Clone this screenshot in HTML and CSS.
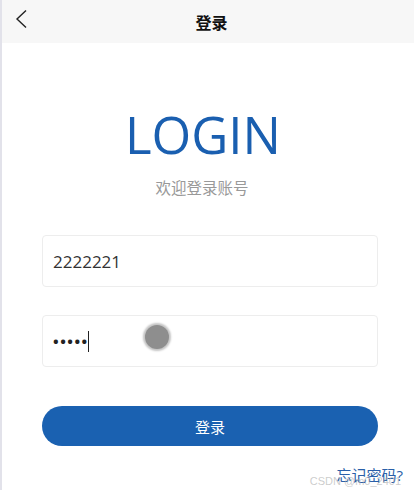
FILE: index.html
```html
<!DOCTYPE html>
<html lang="zh-CN">
<head>
  <meta charset="UTF-8">
  <meta name="viewport" content="width=device-width, initial-scale=1.0">
  <title>登录</title>
  <link rel="stylesheet" href="styles.css">
</head>
<body>
  <div class="page">
    <header class="nav">
      <a class="back" href="#">
        <svg width="14" height="20" viewBox="0 0 14 20"><path d="M12 1.5 L3 10 L12 18.5" fill="none" stroke="#222" stroke-width="1.4"/></svg>
      </a>
      <h2 class="nav-title">登录</h2>
    </header>

    <main class="login">
      <h1 class="logo">LOGIN</h1>
      <p class="welcome">欢迎登录账号</p>

      <div class="field">2222221</div>
      <div class="field password">
        <span class="dots">•••••</span><span class="caret"></span>
        <span class="touch"></span>
      </div>

      <button class="btn">登录</button>

      <div class="links">
        <a href="#" class="forgot">忘记密码?</a>
        <span class="mark">CSDN @m0_2401</span>
      </div>
    </main>
  </div>
</body>
</html>
```

FILE: styles.css
```css
body {
  margin: 0;
  font-family: "Open Sans", "Noto Sans CJK SC", sans-serif;
  background: #fff;
  color: #333;
}
.page {
  border-left: 2px solid #e2e2ea;
  min-height: 490px;
  box-sizing: border-box;
}
.nav {
  height: 43px;
  background: #f7f7f7;
  display: flex;
  align-items: center;
  justify-content: center;
  padding-left: 7px;
  position: relative;
}
.back {
  position: absolute;
  left: 12px;
  top: 9px;
}
.nav-title {
  margin: 0;
  font-size: 16px;
  font-weight: bold;
  color: #111;
}
.login {
  padding: 0 36px 0 40px;
  display: flex;
  flex-direction: column;
  align-items: stretch;
}
.logo {
  margin: 61px 14px 0 0;
  text-align: center;
  font-size: 51px;
  font-weight: normal;
  line-height: 60px;
  color: #1a5fb0;
}
.welcome {
  margin: 14px 16px 0 0;
  text-align: center;
  font-size: 15.5px;
  line-height: 20px;
  color: #999;
}
.field {
  height: 50px;
  margin-top: 37px;
  border: 1px solid #ededed;
  border-radius: 4px;
  padding: 0 10px;
  display: flex;
  align-items: center;
  font-size: 17px;
  color: #333;
  position: relative;
}
.field.password {
  margin-top: 28px;
}
.dots {
  font-size: 15px;
  letter-spacing: 1.5px;
  color: #222;
  font-weight: bold;
}
.caret {
  width: 1px;
  height: 21px;
  background: #222;
  margin-left: -1px;
}
.touch {
  position: absolute;
  left: 102px;
  top: 9px;
  width: 24px;
  height: 24px;
  border-radius: 50%;
  background: #8e8e8e;
  box-shadow: 0 0 2px 2px #c4c4c4;
}
.btn {
  margin-top: 39px;
  height: 40px;
  border: none;
  border-radius: 20px;
  background: #1a61b1;
  color: #fff;
  font-family: inherit;
  font-size: 15px;
}
.links {
  margin-top: 19px;
  margin-right: -25px;
  display: flex;
  justify-content: flex-end;
  position: relative;
}
.forgot {
  font-size: 15px;
  color: #2a5fa8;
  text-decoration: none;
  line-height: 20px;
}
.mark {
  position: absolute;
  right: 2px;
  top: 10px;
  font-size: 11px;
  color: rgba(170, 170, 170, 0.6);
  font-family: "Liberation Sans", sans-serif;
}
```
